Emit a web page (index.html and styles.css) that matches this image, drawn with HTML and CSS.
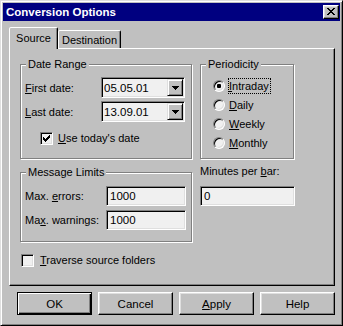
FILE: index.html
```html
<!DOCTYPE html>
<html>
<head>
<meta charset="utf-8">
<title>Conversion Options</title>
<link rel="stylesheet" href="styles.css">
</head>
<body>
<div class="window">
  <div class="titlebar">
    <span class="title">Conversion Options</span>
    <div class="close"><svg width="8" height="7" viewBox="0 0 8 7" shape-rendering="crispEdges"><path d="M0 0h2v1h-2z M6 0h2v1h-2z M1 1h2v1h-2z M5 1h2v1h-2z M2 2h4v1h-4z M3 3h2v1h-2z M2 4h4v1h-4z M1 5h2v1h-2z M5 5h2v1h-2z M0 6h2v1h-2z M6 6h2v1h-2z" fill="#000"/></svg></div>
  </div>
  <div class="client">
    <div class="tabs">
      <div class="tab active">Source</div>
      <div class="tab">Destination</div>
    </div>
    <div class="panel">
      <div class="grid">
        <div class="group">
          <div class="gtitle">Date Range</div>
          <div class="drow first">
            <span class="dlbl"><u>F</u>irst date:</span>
            <div class="combo"><span class="val">05.05.01</span><span class="ddbtn"><svg width="7" height="4" viewBox="0 0 7 4" shape-rendering="crispEdges"><path d="M0 0h7v1h-7z M1 1h5v1h-5z M2 2h3v1h-3z M3 3h1v1h-1z" fill="#000"/></svg></span></div>
          </div>
          <div class="drow second">
            <span class="dlbl"><u>L</u>ast date:</span>
            <div class="combo"><span class="val">13.09.01</span><span class="ddbtn"><svg width="7" height="4" viewBox="0 0 7 4" shape-rendering="crispEdges"><path d="M0 0h7v1h-7z M1 1h5v1h-5z M2 2h3v1h-3z M3 3h1v1h-1z" fill="#000"/></svg></span></div>
          </div>
          <div class="crow today">
            <span class="check"><svg width="7" height="7" viewBox="0 0 7 7" shape-rendering="crispEdges"><path d="M6 0h1v1h-1z M5 1h2v1h-2z M0 2h1v1h-1z M4 2h3v1h-3z M0 3h2v1h-2z M3 3h3v1h-3z M0 4h5v1h-5z M1 5h3v1h-3z M2 6h1v1h-1z" fill="#000"/></svg></span>
            <span class="clbl"><u>U</u>se today's date</span>
          </div>
        </div>
        <div class="group">
          <div class="gtitle">Periodicity</div>
          <div class="radios">
            <div class="rrow"><span class="radio on"><span class="dot"></span></span><span class="rlbl focus"><u>I</u>ntraday</span></div>
            <div class="rrow"><span class="radio"></span><span class="rlbl"><u>D</u>aily</span></div>
            <div class="rrow"><span class="radio"></span><span class="rlbl"><u>W</u>eekly</span></div>
            <div class="rrow"><span class="radio"></span><span class="rlbl"><u>M</u>onthly</span></div>
          </div>
        </div>
        <div class="group">
          <div class="gtitle">Message Limits</div>
          <div class="mrow first">
            <span class="mlbl">Max. <u>e</u>rrors:</span>
            <div class="edit">1000</div>
          </div>
          <div class="mrow second">
            <span class="mlbl">Ma<u>x</u>. warnings:</span>
            <div class="edit">1000</div>
          </div>
        </div>
        <div class="minutes">
          <div class="minlbl">Minutes per <u>b</u>ar:</div>
          <div class="edit wide">0</div>
        </div>
      </div>
      <div class="crow traverse">
        <span class="check"></span>
        <span class="clbl"><u>T</u>raverse source folders</span>
      </div>
    </div>
    <div class="buttons">
      <div class="btn default">OK</div>
      <div class="btn">Cancel</div>
      <div class="btn"><span><u>A</u>pply</span></div>
      <div class="btn">Help</div>
    </div>
  </div>
</div>
</body>
</html>
```

FILE: styles.css
```css
* { box-sizing: border-box; }
html, body { margin: 0; padding: 0; }
body {
  width: 343px;
  height: 326px;
  overflow: hidden;
  background: #c0c0c0;
  font-family: "Liberation Sans", Arial, sans-serif;
  font-size: 11px;
  color: #000;
}
u { text-decoration: underline; text-underline-offset: 1px; }

.window {
  width: 343px;
  height: 326px;
  background: #c0c0c0;
  border: 1px solid;
  border-color: #dfdfdf #000 #000 #dfdfdf;
  box-shadow: inset 1px 1px #fff, inset -1px -1px #808080;
  padding: 2px;
}

.titlebar {
  height: 18px;
  background: #000080;
  display: flex;
  align-items: center;
  justify-content: space-between;
  padding: 0 1px 0 3px;
}
.title {
  color: #fff;
  font-weight: bold;
  font-size: 11.5px;
  line-height: 18px;
}
.close {
  width: 16px;
  height: 14px;
  background: #c0c0c0;
  border: 1px solid;
  border-color: #fff #000 #000 #fff;
  box-shadow: inset -1px -1px #808080, inset 1px 1px #dfdfdf;
  display: flex;
  justify-content: center;
  align-items: flex-start;
  padding-top: 2px;
}
.close svg { display: block; }

.client { padding: 7px 0 0 6px; }

.tabs {
  display: flex;
  align-items: flex-end;
  height: 21px;
  position: relative;
  z-index: 1;
  margin-bottom: -1px;
}
.tab {
  background: #c0c0c0;
  border: 1px solid;
  border-bottom: none;
  border-color: #fff #000 transparent #fff;
  border-radius: 2px 2px 0 0;
  box-shadow: inset -1px 0 #808080;
  display: flex;
  align-items: center;
  justify-content: center;
}
.tab.active {
  width: 49px;
  height: 22px;
  padding-bottom: 2px;
}
.tab:not(.active) {
  width: 63px;
  height: 18px;
  margin-bottom: 1px;
  border-left-color: #fff;
}

.panel {
  width: 326px;
  height: 238px;
  border: 1px solid;
  border-color: #fff #000 #000 #fff;
  box-shadow: inset -1px -1px #808080;
  padding: 15px 0 0 10px;
}

.grid {
  display: grid;
  grid-template-columns: 172px 94px;
  grid-template-rows: 95px 70px;
  column-gap: 8px;
  row-gap: 13px;
}

.group {
  border: 1px solid #808080;
  box-shadow: inset 1px 1px #fff, 1px 1px #fff;
  padding: 0 4px;
}
.gtitle {
  margin-top: -7px;
  margin-left: 1px;
  line-height: 13px;
  height: 13px;
  padding: 0 2px;
  background: #c0c0c0;
  width: fit-content;
}

.drow {
  display: flex;
  align-items: center;
  height: 21px;
}
.drow.first { margin-top: 6px; }
.drow.second { margin-top: 3px; }
.dlbl { width: 76px; }

.combo {
  width: 84px;
  height: 21px;
  display: flex;
  align-items: stretch;
  padding: 1px;
  border: 1px solid;
  border-color: #808080 #fff #fff #808080;
  box-shadow: inset 1px 1px #000, inset -1px -1px #dfdfdf;
  background: #f0f0f0;
}
.val {
  flex: 1;
  display: flex;
  align-items: center;
  padding-left: 1px;
  font-size: 11.5px;
}
.ddbtn {
  width: 16px;
  height: 17px;
  background: #c0c0c0;
  border: 1px solid;
  border-color: #dfdfdf #000 #000 #dfdfdf;
  box-shadow: inset 1px 1px #fff, inset -1px -1px #808080;
  display: flex;
  justify-content: center;
  align-items: center;
}
.ddbtn svg { display: block; }

.crow {
  display: flex;
  align-items: center;
  height: 13px;
}
.crow.today { margin-top: 10px; margin-left: 15px; }
.crow.traverse { margin-top: 12px; margin-left: 1px; }
.check {
  width: 13px;
  height: 13px;
  flex: none;
  background: #f0f0f0;
  border: 1px solid;
  border-color: #808080 #fff #fff #808080;
  box-shadow: inset 1px 1px #000, inset -1px -1px #dfdfdf;
  padding: 2px;
}
.check svg { display: block; }
.clbl { margin-left: 5px; line-height: 13px; }
.traverse .clbl { margin-left: 6px; }

.radios { margin-top: 5px; margin-left: 8px; }
.rrow {
  display: flex;
  align-items: center;
  height: 19px;
}
.radio {
  width: 12px;
  height: 12px;
  flex: none;
  border-radius: 50%;
  border: 1px solid;
  border-color: #808080 #fff #fff #808080;
  box-shadow: inset 1px 1px #000, inset -1px -1px #dfdfdf;
  background: #f0f0f0;
  display: flex;
  align-items: center;
  justify-content: center;
}
.dot {
  width: 4px;
  height: 4px;
  background: #000;
  border-radius: 1px;
}
.rlbl {
  margin-left: 3px;
  line-height: 14px;
  border: 1px dotted transparent;
  padding: 0 1px 0 0;
}
.rlbl.focus { border-color: #000; }

.mrow {
  display: flex;
  align-items: center;
  height: 20px;
}
.mrow.first { margin-top: 7px; }
.mrow.second { margin-top: 4px; }
.mlbl { width: 81px; }

.edit {
  width: 80px;
  height: 20px;
  background: #f0f0f0;
  border: 1px solid;
  border-color: #808080 #fff #fff #808080;
  box-shadow: inset 1px 1px #000, inset -1px -1px #dfdfdf;
  padding: 0 3px;
  display: flex;
  align-items: center;
  font-size: 11.5px;
}
.edit.wide { width: 95px; }

.minutes { margin-top: -7px; }
.minlbl { line-height: 13px; height: 13px; }
.minutes .edit { margin-top: 8px; }

.buttons {
  width: 326px;
  display: flex;
  justify-content: flex-end;
  gap: 6px;
  margin-top: 6px;
}
.btn {
  width: 75px;
  height: 23px;
  border: 1px solid;
  border-color: #fff #000 #000 #fff;
  box-shadow: inset -1px -1px #808080, inset 1px 1px #dfdfdf;
  display: flex;
  align-items: center;
  justify-content: center;
  font-size: 11.5px;
}
.btn.default {
  border-color: #000;
  box-shadow: inset 1px 1px #fff, inset -1px -1px #000, inset -2px -2px #808080;
}
```
